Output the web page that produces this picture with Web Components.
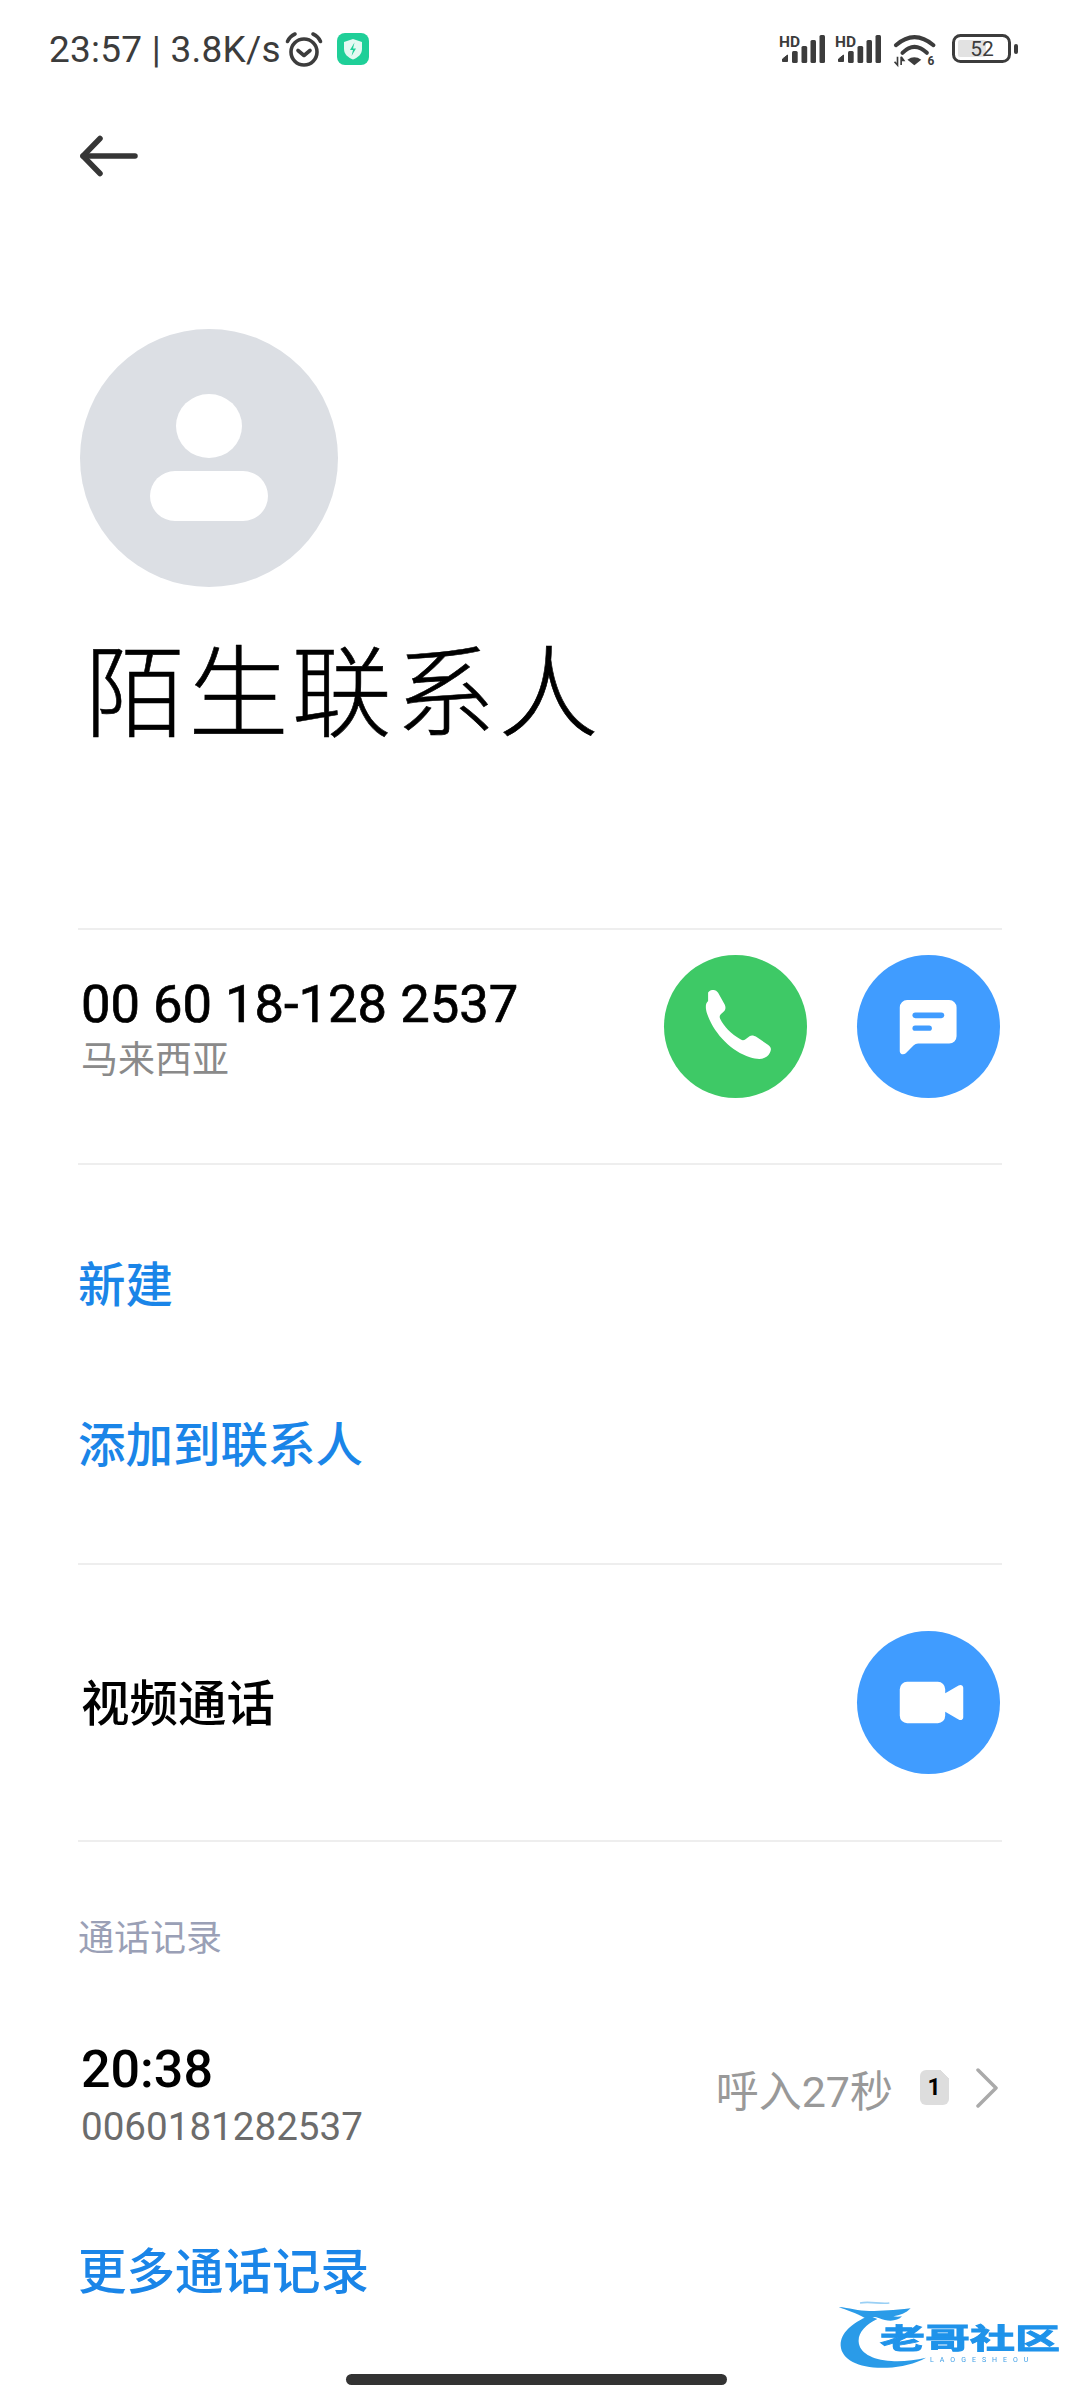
<!DOCTYPE html>
<html lang="zh">
<head>
<meta charset="utf-8">
<title>陌生联系人</title>
<style>
  html, body { margin: 0; background: #fff; }
  body { width: 1080px; height: 2400px; overflow: hidden; font-family: Roboto, "Noto Sans CJK SC", sans-serif; }
</style>
</head>
<body>
<contact-page>
  <status-bar></status-bar>
  <back-bar></back-bar>
  <contact-head name="陌生联系人"></contact-head>
  <phone-row number="00 60 18-128 2537" region="马来西亚"></phone-row>
  <link-list>
    <action-link>新建</action-link>
    <action-link>添加到联系人</action-link>
  </link-list>
  <video-row label="视频通话"></video-row>
  <call-history label="通话记录">
    <call-row time="20:38" number="0060181282537" detail="呼入27秒" count="1"></call-row>
    <action-link size="48.500">更多通话记录</action-link>
  </call-history>
  <site-mark></site-mark>
  <home-bar></home-bar>
</contact-page>

<script>
/**
 * Page frame, children stack top to bottom.
 */
class ContactPage extends HTMLElement {
    constructor() {
        super();
        this.attachShadow({ mode: 'open' });
        this.shadowRoot.innerHTML = /*html*/`
            <style>
                :host { display: flex; flex-direction: column; position: relative; width: 1080px; height: 2400px; color: #000; }
            </style>
            <slot></slot>
        `;
    }
}

/**
 * Phone status bar.
 */
class StatusBar extends HTMLElement {
    constructor() {
        super();
        this.attachShadow({ mode: 'open' });
        this.shadowRoot.innerHTML = /*html*/`
            <style>
                :host { display: flex; align-items: flex-start; justify-content: space-between; height: 100px; padding: 32px 62px 0 49px; box-sizing: border-box; color: #3c3c3c; }
                .left, .right { display: flex; align-items: center; height: 34px; }
                .clock { width: 235px; font-size: 37px; line-height: 34px; letter-spacing: .25px; white-space: nowrap; position: relative; top: 1px; }
                .alarm { margin-left: 2px; }
                .guard { margin-left: 15px; }
                .right { gap: 10px; }
                .wifi { margin-left: 2px; }
                .battery { margin-left: 5px; }
                svg { display: block; flex: none; overflow: visible; }
                text { font-family: Roboto, sans-serif; }
            </style>
            <div class="left">
                <span class="clock">23:57 | 3.8K/s</span>
                <svg class="alarm" width="36" height="34" viewBox="0 0 36 34" fill="none" stroke="#3c3c3c" stroke-width="3.600" stroke-linecap="round" stroke-linejoin="round">
                    <circle cx="18" cy="20" r="13"/>
                    <path d="M12 18.500l6 5 6-5"/>
                    <path d="M1.500 9.500C3 6 5.500 3.500 9 2"/>
                    <path d="M34.500 9.500C33 6 30.500 3.500 27 2"/>
                </svg>
                <svg class="guard" width="32" height="32" viewBox="0 0 32 32">
                    <rect width="32" height="32" rx="8" fill="#1fcf98"/>
                    <path d="M16 6l9 3v7c0 5-3.800 8.500-9 10.500C10.800 24.500 7 21 7 16V9z" fill="#e4f9f2"/>
                    <path d="M17.500 9.500l-4.500 7.500h3l-1.500 6 4.500-7.500h-3z" fill="#1fcf98"/>
                </svg>
            </div>
            <div class="right">
                ${this.signal()}
                ${this.signal()}
                <svg class="wifi" width="44" height="33" viewBox="466 100 132 100" fill="none" stroke="#3c3c3c">
                    <path d="M474 137Q530 88 588 137" stroke-width="12" stroke-linecap="round"/>
                    <path d="M494 160Q530 124 568 160" stroke-width="12" stroke-linecap="round"/>
                    <path d="M509 181Q530 166 551 181L530 198z" fill="#3c3c3c" stroke="none"/>
                    <path d="M479 172v24M470 187l9 10 0-10M490 197v-25M490 172l8 11h-8" stroke-width="5"/>
                    <text x="570" y="197" font-size="36" font-weight="700" fill="#3c3c3c" stroke="none">6</text>
                </svg>
                <svg class="battery" width="66" height="32" viewBox="0 0 66 32">
                    <rect x="1.500" y="2.500" width="56" height="26" rx="7" fill="none" stroke="#3c3c3c" stroke-width="3"/>
                    <rect x="6" y="7" width="28" height="17" rx="2" fill="#e2e2e2"/>
                    <rect x="62" y="11" width="4" height="10" rx="2" fill="#3c3c3c"/>
                    <text x="30" y="22.500" text-anchor="middle" font-size="21" fill="#3c3c3c">52</text>
                </svg>
            </div>
        `;
    }

    /**
     * One HD signal meter.
     *
     * @returns {string} The svg markup.
     */
    signal() {
        return /*html*/`
            <svg width="46" height="32" viewBox="0 0 46 32">
                <text x="0" y="13.500" font-size="15.500" font-weight="700" fill="#3c3c3c">HD</text>
                <path d="M3.500 28.500v-2.500l5-4v6.500z" fill="#3c3c3c" stroke="#3c3c3c" stroke-linejoin="round"/>
                <rect x="13" y="18" width="5.700" height="12" rx="1.500" fill="#3c3c3c"/>
                <rect x="22.500" y="13" width="5.700" height="17" rx="1.500" fill="#3c3c3c"/>
                <rect x="31.500" y="7" width="5.500" height="23" rx="1.500" fill="#3c3c3c"/>
                <rect x="40.500" y="2" width="5.500" height="28" rx="1.500" fill="#3c3c3c"/>
            </svg>
        `;
    }
}

/**
 * Back arrow row.
 */
class BackBar extends HTMLElement {
    constructor() {
        super();
        this.attachShadow({ mode: 'open' });
        this.shadowRoot.innerHTML = /*html*/`
            <style>
                :host { display: flex; align-items: center; height: 110px; padding-left: 79px; position: relative; top: 1px; }
                svg { display: block; }
            </style>
            <svg width="60" height="42" viewBox="0 0 60 42" fill="none" stroke="#363636" stroke-width="5.500" stroke-linecap="round" stroke-linejoin="round">
                <path d="M21 3.500L4 21l17 17.500"/>
                <path d="M4 21h52"/>
            </svg>
        `;
    }
}

/**
 * Avatar and contact name.
 */
class ContactHead extends HTMLElement {
    constructor() {
        super();
        this.attachShadow({ mode: 'open' });
        this.shadowRoot.innerHTML = /*html*/`
            <style>
                :host { display: block; height: 718px; padding: 119px 0 0 80px; box-sizing: border-box; }
                svg { display: block; }
                h1 { margin: 36px 0 0 5px; font-size: 100px; line-height: 144px; font-weight: 300; letter-spacing: 3.400px; white-space: nowrap; -webkit-text-stroke: .6px #000; }
            </style>
            <svg width="258" height="258" viewBox="0 0 258 258">
                <circle cx="129" cy="129" r="129" fill="#dcdfe4"/>
                <ellipse cx="129" cy="97" rx="33" ry="32" fill="#fff"/>
                <rect x="70" y="142" width="118" height="50" rx="25" fill="#fff"/>
            </svg>
            <h1>${this.getAttribute('name')}</h1>
        `;
    }
}

/**
 * Round coloured action button. Icon paths are drawn in a 428 box.
 */
class RoundButton extends HTMLElement {
    constructor() {
        super();
        this.attachShadow({ mode: 'open' });
        const icons = {
            call: {
                view: '72 75 428 428',
                body: '<path d="M204 213c-9 8-8 22-3 38 21 60 72 112 128 130 20 6 38 8 51-2 7-6 12-15 12-22 0-6-3-9-8-13l-36-24c-6-4-14-6-20-2l-12 9c-4 3-9 4-14 1-30-17-50-38-62-62-2-5-2-10 2-14l9-8c6-6 6-13 3-20l-20-36c-4-7-11-10-18-8-5 1-8 3-12 7z" fill="#fff"/>'
            },
            chat: {
                view: '652 75 428 428',
                body: '<path d="M802 210H928a22 22 0 0 1 22 22V318a22 22 0 0 1-22 22H835q-8 0-14 6L798 369c-6 6-18 4-18-6V232a22 22 0 0 1 22-22z" fill="#fff"/><rect x="818" y="247" width="95" height="17" rx="8.500" fill="#409cff"/><rect x="818" y="286" width="58" height="16" rx="8" fill="#409cff"/>'
            },
            video: {
                view: '52 66 428 428',
                body: '<path d="M202 218H294a22 22 0 0 1 22 22V252L356 229c7-4 14 0 14 7V324c0 7-7 11-14 7L316 308V320a22 22 0 0 1-22 22H202a22 22 0 0 1-22-22V240a22 22 0 0 1 22-22z" fill="#fff"/>'
            }
        };
        const icon = icons[this.getAttribute('icon')];
        this.shadowRoot.innerHTML = /*html*/`
            <style>
                :host { display: block; flex: none; width: 143px; height: 143px; border-radius: 50%; background: var(--tone, #409cff); }
                svg { display: block; }
            </style>
            <svg width="143" height="143" viewBox="${icon.view}">${icon.body}</svg>
        `;
    }
}

/**
 * Phone number with its call and message buttons.
 */
class PhoneRow extends HTMLElement {
    constructor() {
        super();
        this.attachShadow({ mode: 'open' });
        this.shadowRoot.innerHTML = /*html*/`
            <style>
                :host { display: flex; align-items: center; height: 237px; margin: 0 78px; padding: 0 2px 40px 3px; box-sizing: border-box; border-top: 2px solid #eeeeee; border-bottom: 2px solid #eeeeee; }
                .text { flex: 1; margin-top: 2px; }
                .number { font-size: 52.500px; line-height: 66px; font-weight: 400; white-space: nowrap; -webkit-text-stroke: .7px #000; }
                .region { font-size: 37px; line-height: 48px; color: #8a8a8a; }
                .buttons { display: flex; gap: 50px; }
                round-button[icon="call"] { --tone: #3ec966; }
            </style>
            <div class="text">
                <div class="number">${this.getAttribute('number')}</div>
                <div class="region">${this.getAttribute('region')}</div>
            </div>
            <div class="buttons">
                <round-button icon="call"></round-button>
                <round-button icon="chat"></round-button>
            </div>
        `;
    }
}

/**
 * Blue text action.
 */
class ActionLink extends HTMLElement {
    constructor() {
        super();
        this.attachShadow({ mode: 'open' });
        const size = this.getAttribute('size') || '47.500';
        this.shadowRoot.innerHTML = /*html*/`
            <style>
                :host { display: flex; align-items: center; height: 160px; font-size: ${size}px; font-weight: 500; color: #1a85e8; white-space: nowrap; }
            </style>
            <slot></slot>
        `;
    }
}

/**
 * Group of text actions under the phone row.
 */
class LinkList extends HTMLElement {
    constructor() {
        super();
        this.attachShadow({ mode: 'open' });
        this.shadowRoot.innerHTML = /*html*/`
            <style>
                :host { display: block; height: 400px; margin: 0 78px; padding-top: 36px; box-sizing: border-box; border-bottom: 2px solid #eeeeee; }
            </style>
            <slot></slot>
        `;
    }
}

/**
 * Video call row.
 */
class VideoRow extends HTMLElement {
    constructor() {
        super();
        this.attachShadow({ mode: 'open' });
        this.shadowRoot.innerHTML = /*html*/`
            <style>
                :host { display: flex; align-items: center; justify-content: space-between; height: 277px; margin: 0 78px; padding: 0 2px 0 3px; box-sizing: border-box; border-bottom: 2px solid #eeeeee; }
                span { margin-bottom: 5px; font-size: 48.500px; font-weight: 500; }
            </style>
            <span>${this.getAttribute('label')}</span>
            <round-button icon="video"></round-button>
        `;
    }
}

/**
 * Call log section.
 */
class CallHistory extends HTMLElement {
    constructor() {
        super();
        this.attachShadow({ mode: 'open' });
        this.shadowRoot.innerHTML = /*html*/`
            <style>
                :host { display: block; margin: 0 78px; }
                .label { margin-top: 73px; font-size: 36px; line-height: 48px; color: #9aa0b6; }
            </style>
            <div class="label">${this.getAttribute('label')}</div>
            <slot></slot>
        `;
    }
}

/**
 * One entry of the call log.
 */
class CallRow extends HTMLElement {
    constructor() {
        super();
        this.attachShadow({ mode: 'open' });
        this.shadowRoot.innerHTML = /*html*/`
            <style>
                :host { display: flex; align-items: center; justify-content: space-between; height: 186px; padding: 0 4.500px 0 3px; margin-top: 38.500px; }
                .time { font-size: 52px; line-height: 64px; font-weight: 500; }
                .number { font-size: 38.600px; line-height: 50px; color: #6c6c6c; }
                .side { display: flex; align-items: center; position: relative; top: -7px; }
                .detail { font-size: 43px; color: #999; white-space: nowrap; }
                .count { display: flex; align-items: center; justify-content: center; width: 29px; height: 35px; margin-left: 26.500px; border-radius: 6px 0 6px 6px; background: linear-gradient(225deg, #fff 6px, #dddddd 6px); font-size: 23px; font-weight: 700; }
                svg { display: block; margin-left: 27px; }
            </style>
            <div>
                <div class="time">${this.getAttribute('time')}</div>
                <div class="number">${this.getAttribute('number')}</div>
            </div>
            <div class="side">
                <span class="detail">${this.getAttribute('detail')}</span>
                <span class="count">${this.getAttribute('count')}</span>
                <svg width="22" height="40" viewBox="0 0 22 40" fill="none" stroke="#aaaaaa" stroke-width="3.500" stroke-linecap="round" stroke-linejoin="round"><path d="M2 2l18 18L2 38"/></svg>
            </div>
        `;
    }
}

/**
 * Watermark in the lower corner.
 */
class SiteMark extends HTMLElement {
    constructor() {
        super();
        this.attachShadow({ mode: 'open' });
        this.shadowRoot.innerHTML = /*html*/`
            <style>
                :host { position: absolute; left: 830px; top: 2295px; width: 240px; height: 90px; filter: blur(.6px); }
                svg { position: absolute; left: 0; top: 0; }
                .name { position: absolute; left: 50px; top: 17px; font-size: 45px; line-height: 54px; font-weight: 700; white-space: nowrap; color: #1f93ea; transform: scaleY(.64); -webkit-text-stroke: 1.500px #1f93ea; }
                .sub { position: absolute; left: 100px; top: 60px; font-size: 7px; line-height: 10px; letter-spacing: 6px; color: #3f9fe6; white-space: nowrap; }
            </style>
            <svg width="240" height="90" viewBox="0 0 720 270" fill="none">
                <path d="M118 62C62 84 30 118 32 152c3 44 60 70 140 66 40-2 84-12 116-30-34 8-70 12-104 10-60-4-96-26-98-58-2-28 22-52 56-68z" fill="#2a9be8"/>
                <path d="M26 36c30 2 60 12 92 12 40 0 70-2 124-8-14 14-32 22-52 24 8 2 18 2 26 0-14 16-44 16-68 6-14-6-26-4-42 0C76 52 50 46 26 36z" fill="#2a9be8"/>
                <path d="M90 24c30-6 60 4 88 0" stroke="#9ad0f5" stroke-width="5"/>
            </svg>
            <span class="name">老哥社区</span>
            <span class="sub">LAOGESHEOU</span>
        `;
    }
}

/**
 * Gesture bar.
 */
class HomeBar extends HTMLElement {
    constructor() {
        super();
        this.attachShadow({ mode: 'open' });
        this.shadowRoot.innerHTML = /*html*/`
            <style>
                :host { position: absolute; left: 346px; top: 2374px; width: 381px; height: 11px; border-radius: 6px; background: #333; }
            </style>
        `;
    }
}

customElements.define('round-button', RoundButton);
customElements.define('contact-page', ContactPage);
customElements.define('status-bar', StatusBar);
customElements.define('back-bar', BackBar);
customElements.define('contact-head', ContactHead);
customElements.define('phone-row', PhoneRow);
customElements.define('action-link', ActionLink);
customElements.define('link-list', LinkList);
customElements.define('video-row', VideoRow);
customElements.define('call-history', CallHistory);
customElements.define('call-row', CallRow);
customElements.define('site-mark', SiteMark);
customElements.define('home-bar', HomeBar);
</script>
</body>
</html>
